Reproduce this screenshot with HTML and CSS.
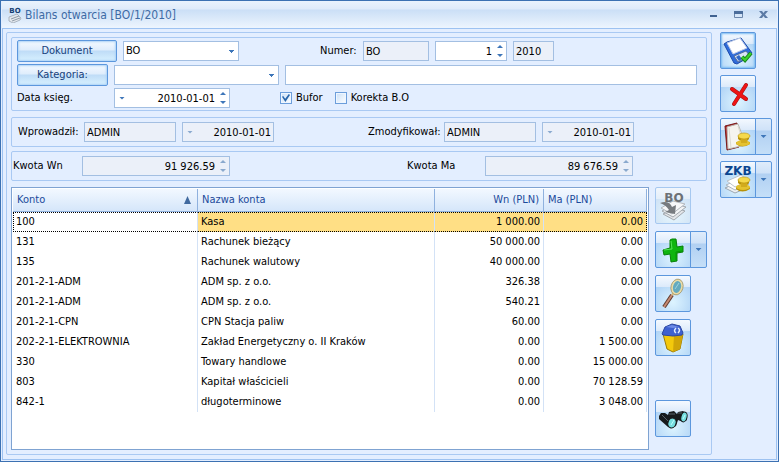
FILE: index.html
```html
<!DOCTYPE html>
<html lang="pl">
<head>
<meta charset="UTF-8" />
<meta name="viewport" content="width=device-width, initial-scale=1" />
<title>Bilans otwarcia [BO/1/2010]</title>
<link rel="stylesheet" href="styles.css">
</head>
<body>
<div class="window">
  <header class="titlebar">
    <svg class="app-icon" viewBox="0 0 14 16" aria-hidden="true">
      <path d="M1 10 L9 7 L13 11 L12 13 L5 16 L1 14Z" fill="#e4e8ed" stroke="#aab4c0"/>
      <path d="M3 12 L11 9 M4 14 L12 11" stroke="#8f9aa6" fill="none"/>
      <text x="7" y="6" text-anchor="middle" class="app-icon-text">BO</text>
    </svg>
    <h1>Bilans otwarcia [BO/1/2010]</h1>
    <div class="window-buttons">
      <button type="button" aria-label="Minimalizuj"><svg viewBox="0 0 10 10"><path d="M1 5h7v2h-7z" fill="#3f6291"/></svg></button>
      <button type="button" aria-label="Maksymalizuj"><svg viewBox="0 0 10 10"><path d="M.5 3v4.500h8v-4.500" fill="none" stroke="#6c87ac"/><path d="M0 1h9v3h-9z" fill="#4b6d9b"/></svg></button>
      <button type="button" aria-label="Zamknij"><svg viewBox="0 0 10 10"><path d="M0 1h3l1.500 2 1.500-2h3l-3 3.500 3 3.500h-3l-1.500-2-1.500 2h-3l3-3.500z" fill="#5c7ba5"/></svg></button>
    </div>
  </header>

  <div class="client">
    <main class="panel">
      <section class="group document">
        <div class="row">
          <button type="button" class="btn btn-document">Dokument</button>
          <select class="combo w-medium" aria-label="Dokument"><option>BO</option></select>
          <label class="label-number" for="numer">Numer:</label>
          <input class="box readonly w-code" id="numer" type="text" value="BO" readonly>
          <div class="field w-number">
            <input type="text" value="1" aria-label="Numer kolejny">
            <span class="spin"></span>
          </div>
          <input class="box readonly w-year" type="text" value="2010" aria-label="Rok" readonly>
        </div>
        <div class="row">
          <button type="button" class="btn btn-category">Kategoria:</button>
          <select class="combo w-category" aria-label="Kategoria"><option></option></select>
          <input class="box grow" type="text" aria-label="Opis kategorii">
        </div>
        <div class="row">
          <label class="label-date" for="data">Data księg.</label>
          <div class="field w-medium">
            <span class="arrow"></span>
            <input type="text" id="data" value="2010-01-01">
            <span class="spin"></span>
          </div>
          <label class="check check-first"><input type="checkbox" checked>Bufor</label>
          <label class="check"><input type="checkbox">Korekta B.O</label>
        </div>
      </section>

      <section class="group authors">
        <label class="label-created" for="wprowadzil">Wprowadził:</label>
        <input class="box readonly w-user" id="wprowadzil" type="text" value="ADMIN" readonly>
        <div class="field readonly w-user">
          <span class="arrow"></span>
          <input type="text" value="2010-01-01" aria-label="Data wprowadzenia" readonly>
        </div>
        <label class="label-modified" for="zmodyfikowal">Zmodyfikował:</label>
        <input class="box readonly w-user" id="zmodyfikowal" type="text" value="ADMIN" readonly>
        <div class="field readonly w-user">
          <span class="arrow"></span>
          <input type="text" value="2010-01-01" aria-label="Data modyfikacji" readonly>
        </div>
      </section>

      <section class="group amounts">
        <label class="label-wn" for="kwota-wn">Kwota Wn</label>
        <div class="field readonly w-amount">
          <input type="text" id="kwota-wn" value="91 926.59" readonly>
          <span class="spin"></span>
        </div>
        <label class="label-ma" for="kwota-ma">Kwota Ma</label>
        <div class="field readonly w-amount">
          <input type="text" id="kwota-ma" value="89 676.59" readonly>
          <span class="spin"></span>
        </div>
      </section>

      <div class="list">
        <div class="grid">
          <table>
            <colgroup><col class="col-account"><col><col class="col-wn"><col class="col-ma"></colgroup>
            <thead>
              <tr><th><span class="sorted">Konto</span></th><th>Nazwa konta</th><th class="num">Wn (PLN)</th><th>Ma (PLN)</th></tr>
            </thead>
            <tbody>
              <tr class="selected"><td>100</td><td>Kasa</td><td class="num">1 000.00</td><td class="num">0.00</td></tr>
              <tr><td>131</td><td>Rachunek bieżący</td><td class="num">50 000.00</td><td class="num">0.00</td></tr>
              <tr><td>135</td><td>Rachunek walutowy</td><td class="num">40 000.00</td><td class="num">0.00</td></tr>
              <tr><td>201-2-1-ADM</td><td>ADM sp. z o.o.</td><td class="num">326.38</td><td class="num">0.00</td></tr>
              <tr><td>201-2-1-ADM</td><td>ADM sp. z o.o.</td><td class="num">540.21</td><td class="num">0.00</td></tr>
              <tr><td>201-2-1-CPN</td><td>CPN Stacja paliw</td><td class="num">60.00</td><td class="num">0.00</td></tr>
              <tr><td>202-2-1-ELEKTROWNIA</td><td>Zakład Energetyczny o. II Kraków</td><td class="num">0.00</td><td class="num">1 500.00</td></tr>
              <tr><td>330</td><td>Towary handlowe</td><td class="num">0.00</td><td class="num">15 000.00</td></tr>
              <tr><td>803</td><td>Kapitał właścicieli</td><td class="num">0.00</td><td class="num">70 128.59</td></tr>
              <tr><td>842-1</td><td>długoterminowe</td><td class="num">0.00</td><td class="num">3 048.00</td></tr>
            </tbody>
          </table>
        </div>

        <div class="tools list-tools">
          <button type="button" class="tool" aria-label="Generuj BO" disabled>
            <svg viewBox="1 1 34 35">
              <path d="M8 27 L21 21 L30 24 L19 33Z" fill="#e3e6e9" stroke="#a2a8ae"/>
              <path d="M7 24 L20 17 L31 20 L18 30Z" fill="#f2f4f5" stroke="#a2a8ae"/>
              <path d="M6 21 L18 14 L30 17 L17 27Z" fill="#f7f8f9" stroke="#b3b8bd"/>
              <path d="M5 16 Q14 13 17 20 L21 18 L20 27 L10 25 L14 23 Q11 18 5 16Z" fill="#777b7f"/>
              <text x="19" y="15" text-anchor="middle" class="icon-text icon-bo">BO</text>
            </svg>
          </button>
          <div class="split">
            <button type="button" class="tool" aria-label="Dodaj">
              <svg viewBox="1 1 34 35">
                <path d="M15 9 L17 8 L21 8 L22 16 L28 15 L28 21 L22 22 L22 30 L16 31 L15 23 L9 24 L8 19 L15 17Z" fill="#0fb50f" stroke="#078007"/>
                <path d="M16 10 L17 18 L9 19" fill="none" stroke="#55e455"/>
                <path d="M21 21 L21 29 M27 20 L21 21" stroke="#079407" fill="none"/>
              </svg>
            </button>
            <button type="button" class="tool-more" aria-label="Więcej opcji dodawania"></button>
          </div>
          <button type="button" class="tool" aria-label="Podgląd">
            <svg viewBox="1 1 34 35">
              <path d="M17 20 L9 32" stroke="#603c30" stroke-width="4"/>
              <path d="M17 20 L9 32" stroke="#c78b72" stroke-width="2"/>
              <path d="M19 17 L17 20" stroke="#d9c27e" stroke-width="2"/>
              <ellipse cx="22" cy="12" rx="5" ry="7" transform="rotate(15 22 12)" fill="#64aabf" stroke="#eadca8" stroke-width="2"/>
              <ellipse cx="22" cy="12" rx="6" ry="8" transform="rotate(15 22 12)" fill="none" stroke="#8b8053" stroke-width=".6"/>
              <path d="M20 14 L24 8" stroke="#9ed3de" fill="none"/>
            </svg>
          </button>
          <button type="button" class="tool" aria-label="Usuń">
            <svg viewBox="1 1 34 35">
              <path d="M8 15 L28 15 L25 30 L18 33 L12 30Z" fill="#f3c90c" stroke="#9b7b08"/>
              <path d="M19 17 L28 15 L25 30 L18 33Z" fill="#d0a508"/>
              <path d="M7 15 L10 8 L17 5 L25 7 L28 14 L27 16 L18 17 L8 16Z" fill="#3e61d0" stroke="#2c479f"/>
              <path d="M11 8 L17 6 L24 8 L18 9Z" fill="#6f8ce6"/>
              <path d="M21 9 Q18 12 21 14 M23 9 Q26 11 23 14" stroke="#e0edff" stroke-width="1.500" fill="none"/>
            </svg>
          </button>
          <button type="button" class="tool tool-last" aria-label="Szukaj">
            <svg viewBox="1 1 34 35">
              <path d="M4 16 L6 13 L10 13 L13 15 L14 12 L19 11 L22 14 L23 12 L28 11 L32 14 L32 20 L28 22 L23 20 L21 26 L17 28 L13 27 L4 19Z" fill="#171a1c"/>
              <path d="M7 15 L13 21 M14 14 L20 14 M23 13 L27 13" stroke="#596067" fill="none"/>
              <ellipse cx="17" cy="23" rx="4" ry="5" transform="rotate(20 17 23)" fill="#75dedf" stroke="#161a1b"/>
              <ellipse cx="29" cy="17" rx="3" ry="5" transform="rotate(15 29 17)" fill="#75dedf" stroke="#161a1b"/>
              <path d="M16 25 L19 20 M28 19 L30 15" stroke="#c0ffff" fill="none"/>
            </svg>
          </button>
        </div>
      </div>
    </main>

    <aside class="tools">
      <button type="button" class="tool tool-default" aria-label="Zapisz">
        <svg viewBox="1 1 34 35">
          <path d="M4 12 L7 10 L21 6 L32 21 L29 25 L17 32 L14 31Z" fill="#2f6cda" stroke="#1d4cac"/>
          <path d="M7 11 L20 6 L27 16 L13 22Z" fill="#fff" stroke="#b8c7e7"/>
          <path d="M14 24 L26 19 L30 24 L18 30Z" fill="#dae4f5" stroke="#536e9e"/>
          <path d="M16 25 L19 23 L22 27 L19 29Z" fill="#3269c7"/>
          <path d="M22 25 L25 28 L31 21" fill="none" stroke="#188418" stroke-width="4"/>
          <path d="M22 25 L25 28 L31 21" fill="none" stroke="#3bd12b" stroke-width="2"/>
        </svg>
      </button>
      <button type="button" class="tool" aria-label="Anuluj">
        <svg viewBox="1 1 34 35">
          <path d="M12 14 L26 24 M26 10 L14 29" fill="none" stroke="#a01717" stroke-width="4" stroke-linecap="round"/>
          <path d="M12 14 L26 24 M26 10 L14 29" fill="none" stroke="#ee1414" stroke-width="3" stroke-linecap="round"/>
        </svg>
      </button>
      <div class="split">
        <button type="button" class="tool" aria-label="Księguj">
          <svg viewBox="1 1 34 35">
            <path d="M5 8 L17 5 L19 29 L7 32Z" fill="#b52525" stroke="#771a1a"/>
            <path d="M7 9 L18 6 L26 27 L8 31Z" fill="#f5f4ef" stroke="#b9b8b2"/>
            <path d="M9 10 L11 30 M18 8 L24 27" stroke="#d9d8d0" fill="none"/>
            <path d="M16 24 v2 q6 5 14 0 v-2z M18 18 v3 l4 3 h4 l3-3 v-3z" fill="#b8920a"/>
            <ellipse cx="23" cy="25" rx="7" ry="3" fill="#e4c22f"/>
            <path d="M21 21 h6 v4 h-6z" fill="#d2ab1d"/>
            <ellipse cx="24" cy="18" rx="6" ry="3" fill="#f5d94c" stroke="#b8920a" stroke-width=".6"/>
          </svg>
        </button>
        <button type="button" class="tool-more" aria-label="Więcej opcji księgowania"></button>
      </div>
      <div class="split">
        <button type="button" class="tool" aria-label="Księguj ZKB">
          <svg viewBox="1 1 34 35">
            <path d="M5 27 L19 21 L29 26 L15 32Z" fill="#eef1f4" stroke="#9ba6b0"/>
            <path d="M6 24 L20 18 L29 23 L15 29Z" fill="#fff" stroke="#acb5bf"/>
            <path d="M7 20 L21 14 L29 20 L15 26Z" fill="#fff" stroke="#bac2ca"/>
            <path d="M16 26 v2 q6 5 14 0 v-2z M18 19 v3 l4 3 h4 l3-3 v-3z" fill="#b8920a"/>
            <ellipse cx="23" cy="26" rx="7" ry="3" fill="#e4c22f"/>
            <path d="M21 22 h6 v4 h-6z" fill="#d2ab1d"/>
            <ellipse cx="24" cy="19" rx="6" ry="3" fill="#f5d94c" stroke="#b8920a" stroke-width=".6"/>
            <text x="18" y="14" text-anchor="middle" class="icon-text icon-zkb">ZKB</text>
          </svg>
        </button>
        <button type="button" class="tool-more" aria-label="Więcej opcji ZKB"></button>
      </div>
    </aside>
  </div>
</div>
</body>
</html>
```

FILE: styles.css
```css
/* Base */
* {
  box-sizing: border-box;
}

body {
  margin: 0;
  background: #e3eeff;
  font-family: "DejaVu Sans Condensed", "DejaVu Sans", Tahoma, sans-serif;
  font-size: 11px;
  line-height: 14px;
  color: #000;
}

button,
input,
select {
  font: inherit;
  color: inherit;
  margin: 0;
}

button {
  padding: 0;
}

svg {
  display: block;
}

/* Window frame */
.window {
  display: flex;
  flex-direction: column;
  min-height: 100vh;
  padding: 0 1px 1px;
  border: 1px solid #3c71b2;
}

.titlebar {
  display: flex;
  align-items: center;
  height: 27px;
  padding: 0 8px 0 6px;
  background: linear-gradient(#eaf3fd, #dfebfa 8px, #cbdff6 9px, #edf5fe);
}

.titlebar h1 {
  flex: 1;
  margin: 0 0 0 3px;
  font-size: 12px;
  font-weight: normal;
  line-height: 16px;
  color: #3d6ba5;
}

.app-icon {
  width: 14px;
  height: 16px;
}

.app-icon-text {
  font: bold 7px "DejaVu Sans", sans-serif;
  fill: #173e70;
}

.window-buttons {
  display: flex;
  gap: 15px;
}

.window-buttons button {
  width: 10px;
  height: 10px;
  border: 0;
  background: none;
}

.client {
  display: flex;
  flex: 1;
  gap: 8px;
  padding: 3px 4px 4px 3px;
  border: 1px solid #9dc2f1;
}

.panel {
  display: flex;
  flex: 1;
  flex-direction: column;
  min-width: 0;
  padding: 4px;
  border: 1px solid #a9c9f3;
  border-radius: 2px;
}

/* Groups of fields */
.group {
  border: 1px solid #a9c9f3;
  border-radius: 2px;
}

.document {
  display: flex;
  flex-direction: column;
  gap: 2px;
  padding: 2px 9px 2px 5px;
}

.row,
.authors,
.amounts {
  display: flex;
  align-items: center;
  gap: 6px;
}

.authors,
.amounts {
  height: 30px;
}

.authors {
  margin-top: 6px;
  padding-left: 6px;
}

.amounts {
  margin-top: 4px;
  padding-left: 1px;
}

label {
  white-space: nowrap;
}

.label-number {
  width: 37px;
  margin-left: 75px;
}

.label-date {
  width: 91px;
}

.label-created {
  width: 60px;
}

.label-modified {
  width: 70px;
  margin-left: 88px;
}

.label-wn {
  width: 63px;
}

.label-ma {
  width: 72px;
  margin-left: 171px;
}

/* Inputs */
.box,
.combo,
.field {
  height: 20px;
  border: 1px solid #a3bfe2;
  border-radius: 0;
  background-color: #fff;
}

.box {
  min-width: 0;
  padding: 0 2px;
}

.combo {
  appearance: none;
  padding: 0 2px;
  background-image: linear-gradient(#3e76b9, #3e76b9), linear-gradient(#3e76b9, #3e76b9), linear-gradient(#3e76b9, #3e76b9);
  background-position: right 4px top 8px, right 5px top 9px, right 6px top 10px;
  background-repeat: no-repeat;
  background-size: 5px 1px, 3px 1px, 1px 1px;
}

.field {
  display: flex;
  align-items: center;
}

.field input {
  flex: 1;
  min-width: 0;
  height: 18px;
  padding: 0 2px;
  border: 0;
  background: none;
  text-align: right;
}

.readonly {
  background-color: #ebf0f9;
}

.arrow,
.spin::before,
.spin::after {
  flex: none;
  width: 6px;
  height: 3px;
  background: #3e76b9;
  clip-path: polygon(0 0, 100% 0, 50% 100%);
}

.arrow {
  margin-left: 4px;
}

.spin {
  display: flex;
  flex: none;
  flex-direction: column;
  gap: 6px;
  width: 6px;
  margin: 0 3px;
}

.spin::before,
.spin::after {
  content: "";
}

.spin::before {
  clip-path: polygon(50% 0, 100% 100%, 0 100%);
}

.readonly .arrow,
.readonly .spin::before,
.readonly .spin::after {
  background: #8aa9ce;
}

.w-medium {
  width: 116px;
}

.w-code {
  width: 66px;
}

.w-number {
  width: 72px;
}

.w-year {
  width: 41px;
}

.w-category {
  width: 165px;
}

.w-user {
  width: 92px;
}

.w-amount {
  width: 148px;
}

.grow {
  flex: 1;
}

.check {
  display: flex;
  align-items: center;
  gap: 4px;
  margin-left: 6px;
}

.check-first {
  margin-left: 44px;
}

.check input {
  display: grid;
  place-items: center;
  appearance: none;
  width: 12px;
  height: 12px;
  border: 1px solid #6c9edb;
  background: linear-gradient(135deg, #c9dff7, #fff);
  box-shadow: inset 0 0 0 1px #eef6ff;
}

.check input:checked::before {
  content: "";
  width: 8px;
  height: 8px;
  background: #2766ac;
  clip-path: polygon(0 35%, 15% 25%, 40% 58%, 85% 0, 100% 12%, 42% 100%);
}

/* Buttons */
.btn {
  height: 22px;
  border: 1px solid #5c97dd;
  border-radius: 2px;
  background: linear-gradient(#f4f9ff, #dfedfc 9px, #bfdcf7 10px, #d8f1ff);
  box-shadow: inset 0 0 2px 1px #aed3f6;
  color: #173f7c;
}

.btn-document {
  width: 100px;
}

.btn-category {
  width: 91px;
}

.tools {
  display: flex;
  flex-direction: column;
  gap: 6px;
  width: 52px;
}

.tool,
.tool-more {
  height: 37px;
  border: 1px solid #5c97dd;
  border-radius: 2px;
}

.tool {
  width: 36px;
  background:
    linear-gradient(#f4f9ff, #dceafa 11px, transparent 11px),
    radial-gradient(circle at 50% 75%, #ddf4ff, #a9cef4 26px);
}

.tool svg {
  width: 34px;
  height: 35px;
}

.tool-default {
  box-shadow: inset 0 0 2px 1px #79bbf2;
}

.tool:disabled {
  border-color: #a6c8f0;
  background:
    linear-gradient(#f1f6fc, #e3eef9 11px, transparent 11px),
    radial-gradient(circle at 50% 75%, #e8f7fd, #cbdff4 26px);
}

.split {
  display: flex;
}

.split .tool {
  border-radius: 2px 0 0 2px;
}

.tool-more {
  display: grid;
  place-items: center;
  width: 17px;
  margin-left: -1px;
  border-radius: 0 2px 2px 0;
  background: linear-gradient(#dfecfb, #cfe2f8 11px, #b1d0f2 12px, #c5dff8);
}

.tool-more::before {
  content: "";
  width: 6px;
  height: 3px;
  background: #3e76b9;
  clip-path: polygon(0 0, 100% 0, 50% 100%);
}

.icon-text {
  font: bold 12px "DejaVu Sans", sans-serif;
}

.icon-bo {
  fill: #6d7175;
}

.icon-zkb {
  fill: #0b4590;
}

/* Account list */
.list {
  display: flex;
  flex: 1;
  gap: 6px;
  margin-top: 6px;
}

.list-tools {
  gap: 7px;
}

.tool-last {
  margin-top: auto;
  margin-bottom: 13px;
}

.grid {
  flex: 1;
  padding: 1px;
  border: 1px solid #7fa3d2;
  background: #fff;
}

table {
  width: 100%;
  border-collapse: separate;
  border-spacing: 0;
  table-layout: fixed;
}

.col-account {
  width: 185px;
}

.col-wn {
  width: 109px;
}

.col-ma {
  width: 103px;
}

th {
  height: 23px;
  padding: 0 4px;
  border-right: 1px solid #8fb1de;
  border-bottom: 1px solid #8fb1de;
  background: linear-gradient(#f2f8ff, #d5e6fa);
  font-weight: normal;
  text-align: left;
  color: #1c4a9b;
}

td {
  height: 20px;
  padding: 0 3px;
  border-right: 1px solid #d3e2f6;
  white-space: nowrap;
}

.num {
  text-align: right;
}

.sorted {
  display: flex;
  align-items: center;
  justify-content: space-between;
}

.sorted::after {
  content: "";
  width: 7px;
  height: 8px;
  margin-right: 2px;
  background: #416a9f;
  clip-path: polygon(50% 0, 100% 100%, 0 100%);
}

.selected td {
  border-top: 1px dotted #000;
  border-bottom: 1px dotted #000;
  background: #ffdf85;
}

.selected td:first-child {
  padding-left: 2px;
  border-left: 1px dotted #000;
  background: #fff;
}

.selected td:last-child {
  border-right: 1px dotted #000;
}
```
